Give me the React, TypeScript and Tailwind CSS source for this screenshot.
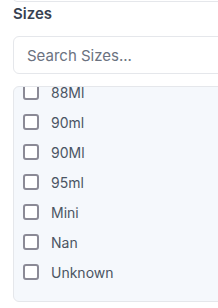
import React from "react";

const items = ["88Ml", "90ml", "90Ml", "95ml", "Mini", "Nan", "Unknown"];

export default function App() {
  return (
    <div className="w-[218px] h-[308px] overflow-hidden bg-white" style={{ fontFamily: "Inter, 'Noto Sans', sans-serif" }}>
      <div className="w-[320px] pl-[13px]">
        <div className="h-[8px] -mt-[6px] border border-[#e5e7eb] rounded-md" />
        <h3 className="mt-[2px] text-[15px] leading-[20px] font-semibold text-[#374151]">Sizes</h3>
        <input
          className="mt-[12px] block w-full h-[38px] rounded-md border border-[#e5e7eb] bg-white px-[13px] text-[15px] text-[#374151] placeholder:text-[#6b7280] outline-none"
          placeholder="Search Sizes..."
        />
        <div className="mt-[12px] h-[216px] overflow-hidden rounded-md border border-[#e5e7eb] bg-[#f5f8fc]">
          <ul className="-mt-[10px] pl-[9px]">
            {items.map((it) => (
              <li key={it} className="flex h-[30px] items-center gap-[12px]">
                <span className="block h-[16px] w-[16px] rounded-[3px] border-2 border-[#8b8a96] bg-white" />
                <span className="text-[14px] text-[#4b5563]">{it}</span>
              </li>
            ))}
          </ul>
        </div>
      </div>
    </div>
  );
}
